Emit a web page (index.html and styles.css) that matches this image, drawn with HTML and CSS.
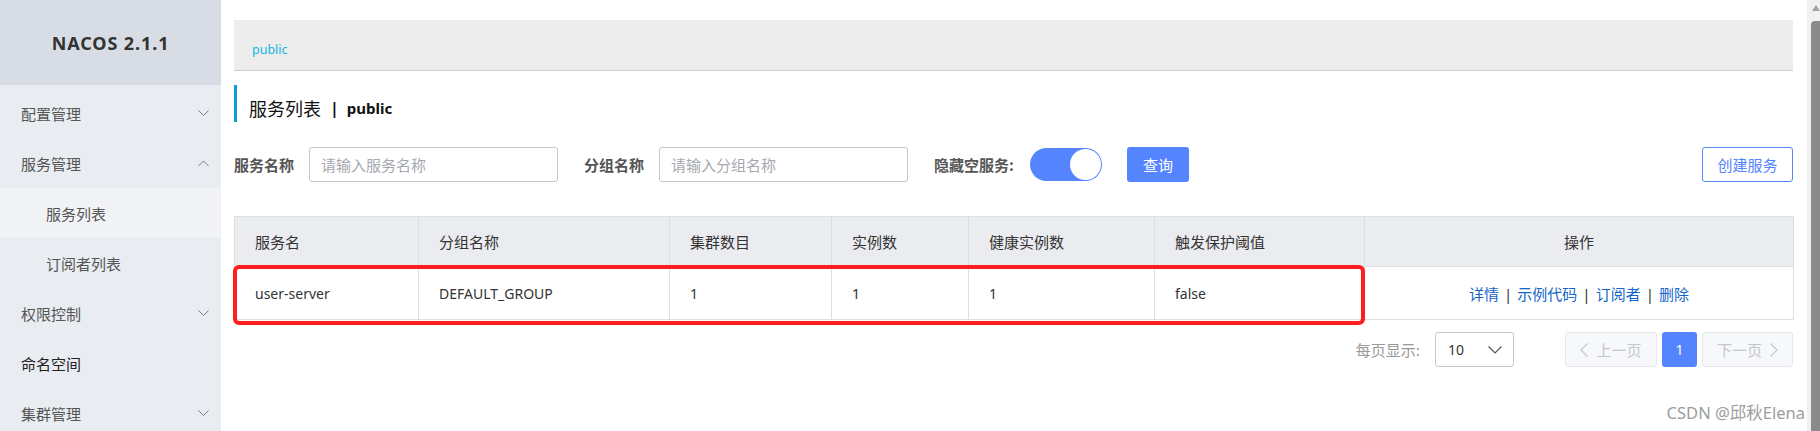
FILE: index.html
```html
<!DOCTYPE html>
<html lang="zh-CN">
<head>
<meta charset="utf-8">
<title>Nacos - 服务列表</title>
<link rel="stylesheet" href="styles.css">
</head>
<body>
<div class="page">
  <aside class="sidebar">
    <div class="brand">NACOS 2.1.1</div>
    <ul class="menu">
      <li class="menu-item"><span>配置管理</span><svg class="chev" width="11" height="7" viewBox="0 0 11 7"><polyline points="0.5,0.5 5.5,5.5 10.5,0.5"/></svg></li>
      <li class="menu-item"><span>服务管理</span><svg class="chev" width="11" height="7" viewBox="0 0 11 7"><polyline points="0.5,6 5.5,1 10.5,6"/></svg></li>
      <li class="menu-item sub active"><span>服务列表</span></li>
      <li class="menu-item sub"><span>订阅者列表</span></li>
      <li class="menu-item"><span>权限控制</span><svg class="chev" width="11" height="7" viewBox="0 0 11 7"><polyline points="0.5,0.5 5.5,5.5 10.5,0.5"/></svg></li>
      <li class="menu-item dark"><span>命名空间</span></li>
      <li class="menu-item"><span>集群管理</span><svg class="chev" width="11" height="7" viewBox="0 0 11 7"><polyline points="0.5,0.5 5.5,5.5 10.5,0.5"/></svg></li>
    </ul>
  </aside>

  <main class="main">
    <div class="breadcrumb"><span class="crumb">public</span></div>

    <div class="page-title"><span class="title-cn">服务列表</span><span class="title-sep">|</span><span class="title-ns">public</span></div>

    <div class="filter">
      <label class="f-label">服务名称</label>
      <div class="input"><span class="placeholder">请输入服务名称</span></div>
      <label class="f-label">分组名称</label>
      <div class="input"><span class="placeholder">请输入分组名称</span></div>
      <label class="f-label hide-label">隐藏空服务:</label>
      <div class="switch"><span class="knob"></span></div>
      <button class="btn-primary">查询</button>
      <div class="spacer"></div>
      <button class="btn-outline">创建服务</button>
    </div>

    <div class="table-wrap">
      <table class="grid">
        <colgroup>
          <col style="width:184px"><col style="width:251px"><col style="width:162px"><col style="width:137px"><col style="width:186px"><col style="width:210px"><col style="width:429px">
        </colgroup>
        <thead>
          <tr>
            <th>服务名</th><th>分组名称</th><th>集群数目</th><th>实例数</th><th>健康实例数</th><th>触发保护阈值</th><th class="center">操作</th>
          </tr>
        </thead>
        <tbody>
          <tr>
            <td class="latin">user-server</td>
            <td class="latin">DEFAULT_GROUP</td>
            <td class="latin">1</td>
            <td class="latin">1</td>
            <td class="latin">1</td>
            <td class="latin">false</td>
            <td class="center ops"><a>详情</a><span class="bar">|</span><a>示例代码</a><span class="bar">|</span><a>订阅者</a><span class="bar">|</span><a>删除</a></td>
          </tr>
        </tbody>
      </table>
      <div class="mark"></div>
    </div>

    <div class="pagination">
      <span class="size-label">每页显示:</span>
      <div class="select"><span class="latin">10</span><svg width="14" height="8" viewBox="0 0 14 8"><polyline points="0.5,0.5 7,7 13.5,0.5"/></svg></div>
      <div class="pager">
        <div class="pg-btn disabled"><svg width="8" height="14" viewBox="0 0 8 14"><polyline points="7.5,0.5 1,7 7.5,13.5"/></svg><span>上一页</span></div>
        <div class="pg-num">1</div>
        <div class="pg-btn disabled"><span>下一页</span><svg width="8" height="14" viewBox="0 0 8 14"><polyline points="0.5,0.5 7,7 0.5,13.5"/></svg></div>
      </div>
    </div>

    <div class="watermark">CSDN @邱秋Elena</div>
  </main>

  <div class="scrollbar">
    <div class="sb-arrow"></div>
    <div class="sb-thumb"></div>
  </div>
</div>
</body>
</html>
```

FILE: styles.css
```css
* { box-sizing: border-box; }

html, body {
  margin: 0;
  padding: 0;
  width: 1820px;
  height: 431px;
  overflow: hidden;
  background: #fff;
  font-family: "Noto Sans", "Noto Sans CJK SC", sans-serif;
  color: #333;
}

.page {
  display: flex;
  width: 1820px;
  height: 431px;
}

/* ---------- sidebar ---------- */
.sidebar {
  width: 221px;
  flex: 0 0 221px;
  background: #e9ecf1;
  height: 431px;
}

.brand {
  height: 85px;
  background: #d8dde5;
  display: flex;
  align-items: center;
  justify-content: center;
  font-weight: 700;
  font-size: 18px;
  letter-spacing: 0.9px;
  color: #333;
}

.menu {
  list-style: none;
  margin: 0;
  padding: 3px 0 0 0;
}

.menu-item {
  height: 50px;
  display: flex;
  align-items: center;
  justify-content: space-between;
  padding: 0 12px 0 21px;
  font-family: "Noto Sans CJK SC", sans-serif;
  font-size: 15px;
  color: #555;
}

.menu-item.sub {
  padding-left: 46px;
}

.menu-item.active {
  background: #f2f3f7;
}

.menu-item.dark {
  color: #222;
}

.chev polyline {
  fill: none;
  stroke: #7a7d85;
  stroke-width: 1;
}

/* ---------- main ---------- */
.main {
  position: relative;
  flex: 1 1 auto;
  padding: 20px 14px 0 13px;
  display: flex;
  flex-direction: column;
}

.breadcrumb {
  height: 51px;
  background: #ededed;
  border-bottom: 1px solid #cfcfcf;
  padding: 7px 0 0 18px;
  line-height: 42px;
}

.crumb {
  font-size: 12.5px;
  color: #13b6e2;
}

.page-title {
  margin-top: 14px;
  height: 37px;
  border-left: 3px solid #0a9ed6;
  padding: 9px 0 0 12px;
  line-height: 28px;
  display: flex;
  align-items: center;
  color: #111;
}

.title-cn {
  font-family: "Noto Sans CJK SC", sans-serif;
  font-size: 18px;
}

.title-sep {
  font-weight: 700;
  font-size: 16px;
  margin: 0 8px 0 9px;
}

.title-ns {
  font-weight: 700;
  font-size: 15px;
}

/* ---------- filter ---------- */
.filter {
  margin-top: 25px;
  height: 35px;
  display: flex;
  align-items: center;
}

.f-label {
  font-family: "Noto Sans CJK SC", sans-serif;
  font-size: 15px;
  font-weight: 700;
  color: #555;
  margin-right: 15px;
}

.hide-label {
  margin-right: 16px;
}

.input {
  width: 249px;
  height: 35px;
  border: 1px solid #c4c6cf;
  border-radius: 3px;
  display: flex;
  align-items: center;
  padding-left: 11px;
  margin-right: 26px;
}

.placeholder {
  font-family: "Noto Sans CJK SC", sans-serif;
  font-size: 15px;
  color: #a5a8b0;
}

.switch {
  width: 72px;
  height: 33px;
  border-radius: 17px;
  background: #5584ff;
  display: flex;
  align-items: center;
  justify-content: flex-end;
  padding-right: 1px;
  margin-right: 25px;
}

.knob {
  width: 31px;
  height: 31px;
  border-radius: 50%;
  background: #fff;
}

.btn-primary {
  width: 62px;
  height: 35px;
  border: none;
  border-radius: 3px;
  background: #5584ff;
  color: #fff;
  font-family: "Noto Sans CJK SC", sans-serif;
  font-size: 15px;
  padding: 0;
}

.spacer { flex: 1 1 auto; }

.btn-outline {
  width: 91px;
  height: 35px;
  border: 1px solid #5584ff;
  border-radius: 3px;
  background: #fff;
  color: #5584ff;
  font-family: "Noto Sans CJK SC", sans-serif;
  font-size: 15px;
  padding: 0;
}

/* ---------- table ---------- */
.table-wrap {
  position: relative;
  margin-top: 34px;
  width: 1559px;
}

.grid {
  width: 1559px;
  border-collapse: collapse;
  table-layout: fixed;
  border: 1px solid #dcdee3;
}

.grid th {
  height: 50px;
  background: #ebecf0;
  border: 1px solid #dcdee3;
  text-align: left;
  font-weight: 400;
  font-family: "Noto Sans CJK SC", sans-serif;
  font-size: 15px;
  color: #333;
  padding: 0 0 0 20px;
}

.grid td {
  height: 53px;
  border: 1px solid #dcdee3;
  padding: 0 0 0 20px;
  font-size: 14px;
  color: #333;
}

.grid .center {
  text-align: center;
  padding-left: 0;
}

.ops a {
  font-family: "Noto Sans CJK SC", sans-serif;
  font-size: 15px;
  color: #1466c8;
}

.ops .bar {
  font-size: 15px;
  color: #333;
  margin: 0 5px;
}

.mark {
  position: absolute;
  left: -1px;
  top: 49px;
  width: 1132px;
  height: 60px;
  border: 4px solid #ff1d1d;
  border-radius: 6px;
}

/* ---------- pagination ---------- */
.pagination {
  margin-top: 12px;
  height: 35px;
  display: flex;
  align-items: center;
  justify-content: flex-end;
}

.size-label {
  font-family: "Noto Sans CJK SC", sans-serif;
  font-size: 15px;
  color: #999;
  margin-right: 15px;
}

.select {
  width: 79px;
  height: 35px;
  border: 1px solid #c4c6cf;
  border-radius: 3px;
  display: flex;
  align-items: center;
  justify-content: space-between;
  padding: 0 11px 0 12px;
  font-size: 14px;
  color: #333;
  margin-right: 51px;
}

.select polyline {
  fill: none;
  stroke: #555;
  stroke-width: 1.2;
}

.pager {
  display: flex;
  gap: 5px;
}

.pg-btn {
  height: 35px;
  width: 92px;
  border: 1px solid #e6e7eb;
  background: #f7f8fa;
  border-radius: 3px;
  display: flex;
  align-items: center;
  justify-content: center;
  gap: 8px;
  font-family: "Noto Sans CJK SC", sans-serif;
  font-size: 15px;
  color: #c4c6cf;
}

.pg-btn + .pg-num + .pg-btn { width: 91px; }

.pg-btn polyline {
  fill: none;
  stroke: #c4c6cf;
  stroke-width: 1.2;
}

.pg-num {
  width: 35px;
  height: 35px;
  border-radius: 3px;
  background: #5584ff;
  color: #fff;
  font-size: 14px;
  display: flex;
  align-items: center;
  justify-content: center;
}

.watermark {
  position: absolute;
  right: 2px;
  top: 400px;
  font-size: 16.5px;
  color: #9c9c9c;
  white-space: nowrap;
}

/* ---------- scrollbar ---------- */
.scrollbar {
  width: 13px;
  flex: 0 0 13px;
  background: #f1f1f1;
  display: flex;
  flex-direction: column;
  align-items: flex-end;
}

.sb-arrow {
  width: 0;
  height: 0;
  margin: 5px 0 0 0;
  border-left: 4px solid transparent;
  border-right: 4px solid transparent;
  border-bottom: 6px solid #a3a3a3;
  align-self: center;
  transform: translateX(2px);
}

.sb-thumb {
  margin-top: 10px;
  width: 9px;
  flex: 1 1 auto;
  background: #8a8a8a;
  border-radius: 4px 0 0 0;
}

.latin {
  font-family: "Noto Sans", sans-serif;
}
```
